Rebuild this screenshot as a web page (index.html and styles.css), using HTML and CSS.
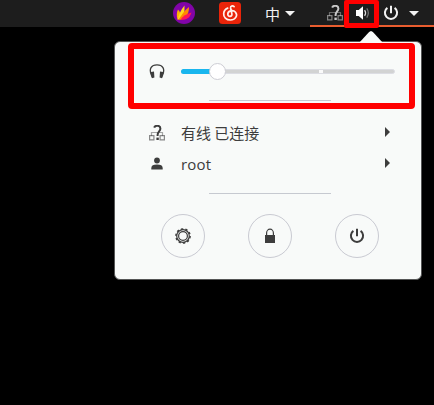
FILE: index.html
```html
<!DOCTYPE html>
<html lang="zh-CN">
<head>
<meta charset="utf-8">
<title>System menu</title>
<link rel="stylesheet" href="styles.css">
</head>
<body>
<svg class="defs" aria-hidden="true">
  <symbol id="network" viewBox="0 0 16 16">
    <path d="M2.5 11V7.5h11V11" fill="none" stroke="currentColor" stroke-width="1.2" opacity=".45"/>
    <path d="M.6 10.600h4.300v4.300H.6zM11.100 10.600h4.300v4.300h-4.300z" fill="none" stroke="currentColor" stroke-width="1.2" opacity=".6"/>
    <path d="M5.200 2.600C6 .2 11.400-.2 11.400 3.600c0 2.600-2.800 3-2.800 6.400v1" fill="none" stroke="currentColor" stroke-width="2"/>
    <path d="M7.400 12.600h2.400V15H7.400z" fill="currentColor"/>
  </symbol>
  <symbol id="power" viewBox="0 0 16 16">
    <path d="M4.400 2.900a6.100 6.100 0 1 0 7.200 0M8 .8v7.400" fill="none" stroke="currentColor" stroke-width="2"/>
  </symbol>
</svg>

<header class="topbar">
  <svg class="flame" viewBox="0 0 22 22">
    <circle cx="11" cy="11" r="11" fill="#8104a8"/>
    <path d="M4.500 17.500C3.500 14 3.500 10.500 5 7.500c1.500 1.500 2.200 3 2.500 5z" fill="#ffb300"/>
    <path d="M4.500 18C6 12.500 7.500 8 11.500 3.500c-.2 3 .5 5.500-1 9-1.200 2.800-3.500 4.500-6 5.500z" fill="#ffd91c"/>
    <path d="M5 18c3.500-4 6-9.500 11-13 0 4-.8 7.500-4 10.500-2 1.800-4.500 2.500-7 2.500z" fill="#ff8b00"/>
    <path d="M7.500 17.500c2-3.500 6-5.500 11-7-1 3-2.200 5-4.700 6.300-2 1-4.200 1.200-6.300.7z" fill="#ff1458"/>
  </svg>
  <svg class="music" viewBox="0 0 22 22">
    <rect width="22" height="22" rx="3.5" fill="#ea2409"/>
    <path d="M15.100 4.700c-1.500-1.400-3.800-.7-3.500 1.300l1.300 5.800c.5 3.200-3.900 3.300-4.100.5-.2-3.700 5.400-4.900 7.700-2.100 2.700 3.400-.3 7.800-5 7.800-4.400 0-7.100-3-6.800-6.500.2-2.600 1.600-4.400 4-5.400" fill="none" stroke="#fff0eb" stroke-width="1.7" stroke-linecap="round"/>
  </svg>
  <div class="input"><span>中</span><i class="down"></i></div>
  <div class="status">
    <svg class="icon net"><use href="#network"/></svg>
    <div class="volume">
      <svg class="icon" viewBox="0 0 16 16">
        <path d="M1 5h2.700L8 1.200v13.600L3.700 11H1z" fill="#fff"/>
        <path d="M9.600 5.200q2 2.800 0 5.600" fill="none" stroke="#ddd" stroke-width="1.2"/>
        <path d="M11.800 3.400q3.100 4.600 0 9.200" fill="none" stroke="#777" stroke-width="1.2"/>
      </svg>
    </div>
    <svg class="icon top-power"><use href="#power"/></svg>
    <i class="down"></i>
  </div>
</header>

<main class="panel">
  <div class="pointer"></div>
  <div class="highlight"></div>
  <section class="sound">
    <svg class="icon" viewBox="0 0 16 16">
      <path d="M2.300 10.500C-.2 5 2.200.8 8 .8s8.200 4.200 5.700 9.700" fill="none" stroke="#3d3d3d" stroke-width="1.3"/>
      <path d="M2 8l3-.6.4 6.200-2.400.6C1.800 12.400 1.300 10 2 8zM14 8l-3-.6-.4 6.200 2.400.6c1.200-1.800 1.700-4.200 1-6.200z" fill="#3d3d3d"/>
    </svg>
    <div class="slider"><div class="fill"></div><div class="mark"></div><div class="knob"></div></div>
  </section>
  <div class="separator"></div>
  <nav class="rows">
    <div class="row"><svg class="icon"><use href="#network"/></svg><span class="cjk">有线 已连接</span><i class="right"></i></div>
    <div class="row"><svg class="icon" viewBox="0 0 16 16"><circle cx="8" cy="4.500" r="2.900" fill="#3d3d3d"/><path d="M2.300 13.500v-1.600Q2.300 8.500 8 8.500t5.700 3.400v1.600z" fill="#3d3d3d"/></svg><span class="user">root</span><i class="right"></i></div>
  </nav>
  <div class="separator"></div>
  <footer class="actions">
    <div class="button"><svg class="icon" viewBox="0 0 16 16">
      <circle cx="8" cy="8" r="7.100" fill="none" stroke="#3d3d3d" stroke-width="1.5" stroke-dasharray="2.25 2.21"/>
      <circle cx="8" cy="8" r="6.300" fill="none" stroke="#3d3d3d" stroke-width="1.2"/>
      <circle cx="8" cy="8" r="4.400" fill="none" stroke="#3d3d3d" stroke-width="1.2"/>
    </svg></div>
    <div class="button"><svg class="icon" viewBox="0 0 16 16"><path d="M3 7h10v8H3z" fill="#3d3d3d"/><path d="M4.600 7V5a3.400 3.800 0 0 1 6.800 0v2" fill="none" stroke="#3d3d3d" stroke-width="1.2"/></svg></div>
    <div class="button"><svg class="icon"><use href="#power"/></svg></div>
  </footer>
</main>
</body>
</html>
```
FILE: styles.css
```css
* { box-sizing: border-box; }

body {
  margin: 0;
  width: 434px;
  height: 405px;
  overflow: hidden;
  background: #000;
  color: #3d3d3d;
  font: 15px "Open Sans", "Noto Sans", "Noto Sans CJK SC", sans-serif;
}

svg { display: block; flex: none; }
.defs { position: absolute; width: 0; height: 0; }
.icon { width: 16px; height: 16px; }

.topbar {
  display: flex;
  height: 27px;
  padding-left: 173px;
  background: #1d1d1d;
  color: #f2f2f2;
}

.flame, .music { width: 22px; height: 22px; margin-top: 2px; }
.music { margin-left: 24px; }

.input {
  display: flex;
  align-items: center;
  gap: 5px;
  width: 69px;
  padding-left: 24px;
  font: 15px/27px "Noto Sans CJK SC", sans-serif;
}

.down {
  flex: none;
  width: 10px;
  height: 5px;
  background: #f2f2f2;
  clip-path: polygon(0 0, 100% 0, 50% 100%);
}

.status {
  display: flex;
  align-items: center;
  width: 124px;
  padding-left: 17px;
  border-bottom: 2px solid #e95d2f;
}

.status > .down { margin-top: 2px; }

.net { margin-top: 1px; color: #c8c8c8; }

.volume {
  display: flex;
  flex: none;
  align-self: flex-start;
  position: relative;
  width: 35px;
  height: 28px;
  margin-left: 1px;
  padding: 5px 0 0 11px;
}

.volume::after {
  content: "";
  position: absolute;
  inset: 0;
  border: 5px solid #f00;
  border-top-width: 4px;
  border-radius: 2px;
}

.top-power { margin: 1px 10px 0 4px; }

.panel {
  position: relative;
  width: 308px;
  height: 239px;
  margin: 14px 0 0 114px;
  padding-top: 22px;
  border: 1px solid #555656;
  border-radius: 6px;
  background: #f8faf9;
}

.pointer {
  position: absolute;
  top: -11px;
  left: 244px;
  width: 24px;
  height: 12px;
  background: #f8faf9;
  clip-path: polygon(0 100%, 42% 8%, 50% 0, 58% 8%, 100% 100%);
}

.highlight {
  position: absolute;
  top: 1px;
  left: 13px;
  width: 287px;
  height: 66px;
  border: 6px solid #f00;
  border-radius: 4px;
}

.sound {
  display: flex;
  align-items: center;
  height: 16px;
  padding-left: 34px;
}

.slider {
  position: relative;
  width: 214px;
  height: 5px;
  margin: 0 0 1px 16px;
  border: 1px solid #dcdde3;
  border-radius: 3px;
  background: #d2d3d3;
}

.fill {
  width: 36px;
  height: 5px;
  margin: -1px;
  border-radius: 3px;
  background: #19b6ee;
}

.mark {
  position: absolute;
  top: 0;
  left: 137px;
  width: 4px;
  height: 3px;
  background: #fafafa;
}

.knob {
  position: absolute;
  top: -7px;
  left: 27px;
  width: 17px;
  height: 17px;
  border: 1px solid #cdcdd4;
  border-radius: 50%;
  background: #fff;
}

.separator {
  width: 122px;
  height: 1px;
  margin-left: 94px;
  background: #c6c9d0;
}

.sound + .separator { margin-top: 20px; }

.rows { padding: 16px 27px 14px 34px; }

.row {
  display: flex;
  align-items: center;
  height: 31px;
}

.row .icon { margin-right: 16px; }
.user { letter-spacing: .15px; }
.cjk { font-family: "Noto Sans CJK SC", sans-serif; }

.right {
  width: 5px;
  height: 10px;
  margin: 0 4px 1px auto;
  background: #3d3d3d;
  clip-path: polygon(0 0, 100% 50%, 0 100%);
}

.actions {
  display: flex;
  gap: 43px;
  padding: 20px 0 0 46px;
}

.button {
  display: flex;
  align-items: center;
  justify-content: center;
  width: 44px;
  height: 44px;
  border: 1px solid #c9cad2;
  border-radius: 50%;
}
```
